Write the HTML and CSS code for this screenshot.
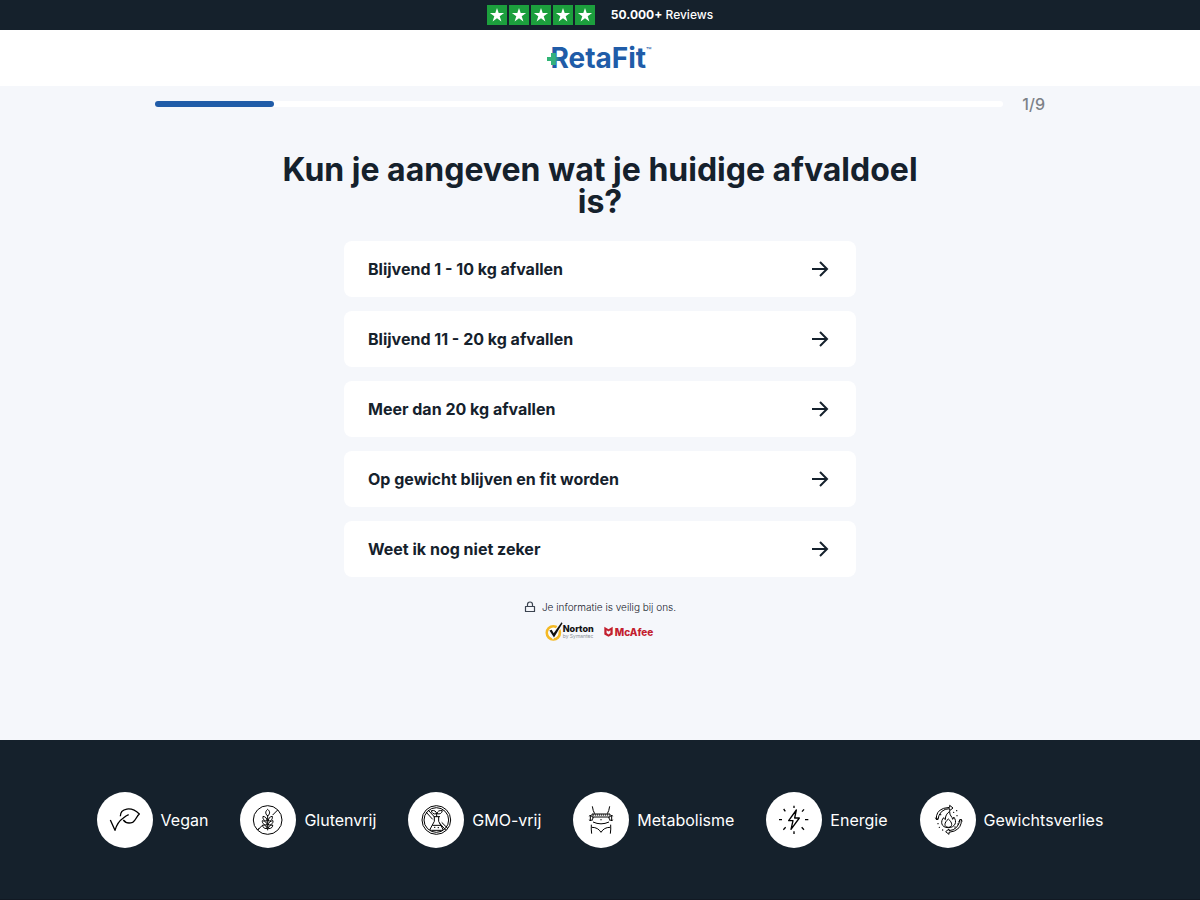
FILE: index.html
```html
<!DOCTYPE html>
<html lang="nl">
<head>
<meta charset="utf-8">
<meta name="viewport" content="width=device-width, initial-scale=1">
<title>RetaFit</title>
<link rel="stylesheet" href="styles.css">
</head>
<body>
<svg class="defs" aria-hidden="true">
  <symbol id="star" viewBox="0 0 20 20"><path d="M10 3l1.7 5.1h5.4l-4.4 3.2 1.7 5.2L10 13.3l-4.4 3.2 1.7-5.2-4.4-3.2h5.4z" fill="#fff"/></symbol>
  <symbol id="arrow" viewBox="0 0 18 18"><path d="M1 9h15M9 2l7 7-7 7" fill="none" stroke="#15212c" stroke-width="2"/></symbol>
</svg>
<div class="reviews">
  <div class="stars" role="img" aria-label="5 sterren">
    <svg class="star"><use href="#star"/></svg><svg class="star"><use href="#star"/></svg><svg class="star"><use href="#star"/></svg><svg class="star"><use href="#star"/></svg><svg class="star"><use href="#star"/></svg>
  </div>
  <p class="reviews-text"><strong>50.000+</strong> Reviews</p>
</div>
<header class="header">
  <a class="logo" href="#">RetaFit<span class="tm">™</span>
    <svg class="logo-plus" viewBox="0 0 14 14" aria-hidden="true"><defs><linearGradient id="g"><stop offset="0" stop-color="#2fb573"/><stop offset=".6" stop-color="#35b080"/><stop offset="1" stop-color="#205ca8"/></linearGradient></defs><path d="M0 5h4V1h5v4h4v4H9v4H4V9H0z" fill="url(#g)"/></svg>
  </a>
</header>
<main class="main">
  <div class="progress">
    <div class="track"><div class="bar"></div></div>
    <span class="step">1/9</span>
  </div>
  <h1 class="title">Kun je aangeven wat je huidige afvaldoel is?</h1>
  <div class="options">
    <button class="option" type="button">Blijvend 1 - 10 kg afvallen<svg class="arrow"><use href="#arrow"/></svg></button>
    <button class="option" type="button">Blijvend 11 - 20 kg afvallen<svg class="arrow"><use href="#arrow"/></svg></button>
    <button class="option" type="button">Meer dan 20 kg afvallen<svg class="arrow"><use href="#arrow"/></svg></button>
    <button class="option" type="button">Op gewicht blijven en fit worden<svg class="arrow"><use href="#arrow"/></svg></button>
    <button class="option" type="button">Weet ik nog niet zeker<svg class="arrow"><use href="#arrow"/></svg></button>
  </div>
  <p class="secure">
    <svg class="lock" viewBox="0 0 12 12" aria-hidden="true"><path d="M1.500 5.500h9v5h-9zM3.500 5.500V3.500a2.500 2.500 0 0 1 5 0v2" fill="none" stroke="#3b4450" stroke-width="1.200" stroke-linejoin="round"/></svg>
    Je informatie is veilig bij ons.
  </p>
  <div class="badges">
    <div class="norton">
      <svg class="norton-mark" viewBox="0 0 54 64" aria-hidden="true"><circle cx="25" cy="36" r="20" fill="#fff" stroke="#f4b925" stroke-width="8"/><path d="M14 31l10 15L52 4" fill="none" stroke="#f5f7fb" stroke-width="12"/><path d="M13 29l7-2 6 10L50 4l3 3-26 43z" fill="#111"/></svg>
      <div class="norton-text"><span class="norton-name">Norton</span><span class="norton-by">by Symantec</span></div>
    </div>
    <div class="mcafee"><svg class="mcafee-mark" viewBox="0 0 28 34" aria-hidden="true"><path d="M1 2l13 8 13-8v24l-13 7-13-7zM8 13v9l6 4 6-4v-9l-6 4z" fill="#c3202f" fill-rule="evenodd"/></svg>McAfee</div>
  </div>
</main>
<footer class="footer">
  <ul class="features">
    <li class="feature"><svg class="icon" viewBox="0 0 168 168" aria-hidden="true"><g class="thick"><path d="M40 84l14 31q7-25 25-37 8-7 16-10"/><path d="M70 73C70 48 103 42 127 66c-9 7-9 18-20 25-11 4-22 1-28-7"/></g></svg>Vegan</li>
    <li class="feature"><svg class="icon" viewBox="0 0 168 168" aria-hidden="true"><g class="line"><circle cx="83" cy="84" r="43"/><path d="M53 114l14-14M98 69l15-15M58 108l-5 6M83 115V69M83 72c-10-9-5-16 0-20 5 4 10 11 0 20M81 87c-11 0-13-8-12-14 7 1 12 5 12 14zM85 87c11 0 13-8 12-14-7 1-12 5-12 14zM81 99c-11 0-15-7-14-13 8 1 14 5 14 13zM85 99c11 0 15-7 14-13-8 1-14 5-14 13zM81 110c-10 0-14-6-13-11 8 0 13 4 13 11zM85 110c10 0 14-6 13-11-8 0-13 4-13 11z"/></g></svg>Glutenvrij</li>
    <li class="feature"><svg class="icon" viewBox="0 0 168 168" aria-hidden="true"><g class="line"><circle cx="85" cy="84" r="43"/><circle cx="85" cy="84" r="37"/><path d="M60 54l17 18M54 60l20 22M95 94l19 21M101 91l19 19M79 74v14L66 112q0 3 4 3h31q4 0 4-3L92 88V74M76 74h20M73 100h26M78 106h4M89 107h4M86 74V63M86 65c-9 3-15-2-16-9 9-2 15 2 16 9zM87 65c9 3 15-2 16-9-9-2-15 2-16 9z"/></g></svg>GMO-vrij</li>
    <li class="feature"><svg class="icon" viewBox="0 0 168 168" aria-hidden="true"><g class="line"><path d="M58 43q2 14 7 22M110 43q-2 14-7 22M57 66h54v9H57zM62 67v4M68 67v4M74 67v4M80 67v4M86 67v4M92 67v4M98 67v4M104 67v4M52 70v17M49 83l3 4 3-4M49 73l3-4 3 4M116 70v17M113 83l3 4 3-4M113 73l3-4 3 4M61 75q-2 7-5 12M107 75q2 7 5 12M55 98q-1 13 1 27M113 98q1 13-1 27M84 81v4M60 90q24 11 48 0M57 106q18 0 27 15 9-15 27-15"/></g></svg>Metabolisme</li>
    <li class="feature"><svg class="icon" viewBox="0 0 168 168" aria-hidden="true"><g class="thick"><path d="M91 54L68 86h13l-6 26 25-34H86zM84 41v7M84 118v8M39 83h9M117 83h10M53 51l5 7M114 52l-6 7M52 113l7-7M114 113l-7-7"/></g></svg>Energie</li>
    <li class="feature"><svg class="icon" viewBox="0 0 168 168" aria-hidden="true"><g class="line"><path d="M49 83q-2-26 22-34l18-3v-6l10 8-10 8v-6q-30 0-36 34M46 77l5 7 5-8M124 82q2 25-21 35l-16 4v6l-10-8 10-8v5q28-2 33-34M127 88l-5-7-6 8M85 107c-23 0-24-20-14-30 2 5 4 5 5 6 0-12 4-18 13-25-1 14 8 15 9 24 3-2 3-5 3-7 12 14 4 32-16 32zM85 106c-14-1-13-14 0-25 13 11 14 24 0 25z"/></g><path class="dots" d="M62 68h.1M54 95h.1M58 106h.1M68 114h.1M101 61h.1M111 71h.1M114 96h.1M105 105h.1M110 56h.1"/></svg>Gewichtsverlies</li>
  </ul>
</footer>
</body>
</html>
```
FILE: styles.css
```css
* { box-sizing: border-box; }
body {
  margin: 0;
  min-height: 100vh;
  display: flex;
  flex-direction: column;
  background: #f5f7fb;
  color: #15212c;
  font-family: Inter, "Liberation Sans", sans-serif;
}
.defs { position: absolute; width: 0; height: 0; }
.reviews {
  display: flex;
  align-items: center;
  justify-content: center;
  gap: 16px;
  height: 30px;
  background: #15212c;
  color: #fff;
}
.stars { display: flex; gap: 2px; }
.star { width: 20px; height: 20px; background: #1c9f3d; }
.reviews-text { margin: 0; font-size: 12px; line-height: 20px; font-weight: 500; }
.header {
  display: flex;
  align-items: center;
  justify-content: center;
  height: 56px;
  background: #fff;
}
.logo {
  position: relative;
  display: flex;
  padding-left: 2px;
  color: #205ca8;
  font-size: 28px;
  line-height: 32px;
  font-weight: 700;
  text-decoration: none;
}
.tm { font-size: 9px; line-height: 18px; font-weight: 400; }
.logo-plus { position: absolute; left: -1px; top: 10px; width: 14px; height: 14px; }
.main { flex: 1; padding: 8px 24px 96px; }
.progress {
  display: flex;
  align-items: center;
  gap: 19px;
  max-width: 890px;
  margin: 0 auto;
}
.track { flex: 1; height: 6px; border-radius: 3px; background: #fff; }
.bar { width: 14%; height: 6px; border-radius: 3px; background: #205ca8; }
.step { color: #7d8288; font-size: 16px; line-height: 20px; font-weight: 500; }
.title {
  max-width: 640px;
  margin: 40px auto 23px;
  font-size: 32px;
  line-height: 32px;
  font-weight: 650;
  text-align: center;
}
.options {
  display: flex;
  flex-direction: column;
  gap: 14px;
  max-width: 512px;
  margin: 0 auto;
}
.option {
  display: flex;
  align-items: center;
  justify-content: space-between;
  height: 56px;
  padding: 0 27px 0 24px;
  border: 0;
  border-radius: 8px;
  background: #fff;
  color: #15212c;
  font: 650 16px/24px Inter, "Liberation Sans", sans-serif;
  text-align: left;
  cursor: pointer;
}
.arrow { width: 18px; height: 18px; }
.secure {
  display: flex;
  align-items: center;
  justify-content: center;
  gap: 6px;
  margin: 22px 0 6px;
  font-size: 10px;
  line-height: 16px;
  font-weight: 300;
}
.lock { width: 12px; height: 12px; }
.badges {
  display: flex;
  justify-content: center;
  align-items: center;
  gap: 10px;
  padding-right: 2px;
}
.norton { display: flex; align-items: center; }
.norton-mark { width: 18px; height: 21px; }
.norton-text { display: flex; flex-direction: column; }
.norton-name { color: #111; font-size: 9px; line-height: 9px; font-weight: 800; }
.norton-by { color: #8b9096; font-size: 5px; line-height: 6px; }
.mcafee {
  display: flex;
  align-items: center;
  gap: 2px;
  color: #c3202f;
  font-size: 10px;
  line-height: 12px;
  font-weight: 800;
}
.mcafee-mark { width: 9px; height: 11px; }
.footer {
  padding: 52px 24px 51px;
  border-bottom: 1px solid #111923;
  background: #15212c;
  color: #fff;
}
.features {
  display: flex;
  flex-wrap: wrap;
  justify-content: center;
  gap: 32px;
  margin: 0;
  padding: 0;
  list-style: none;
}
.feature { display: flex; align-items: center; gap: 8px; font-size: 16px; line-height: 24px; }
.icon { width: 56px; height: 56px; border-radius: 50%; background: #fff; }
.line, .thick { fill: none; stroke: #000; stroke-width: 3; stroke-linejoin: round; }
.thick { stroke-width: 4; }
.dots { stroke: #000; stroke-width: 4; stroke-linecap: round; }
```
